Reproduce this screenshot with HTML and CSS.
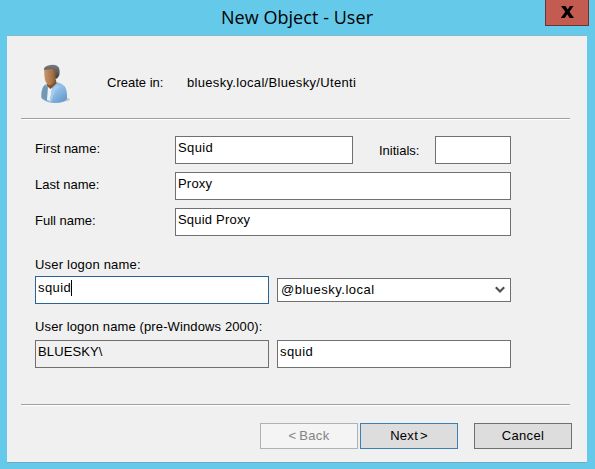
FILE: index.html
```html
<!DOCTYPE html>
<html lang="en">
<head>
<meta charset="utf-8">
<title>New Object - User</title>
<link rel="stylesheet" href="styles.css">
</head>
<body>
<div class="window">
  <header class="titlebar">
    <h1 class="title">New Object - User</h1>
    <button class="close" aria-label="Close">
      <svg width="14" height="12" viewBox="0 0 14 12"><path d="M1 0h4.500l2.200 3.500L10 0h3.500l-4 5.800L14 12H9.700L7.200 8.300 4.700 12H.8l4.500-6.200z"/></svg>
    </button>
  </header>
  <main class="panel">
    <section class="location">
      <svg class="avatar" width="32" height="42" viewBox="0 0 32 42">
        <defs>
          <linearGradient id="coat" x1="0" y1="0" x2="1" y2="1"><stop offset="0" stop-color="#89b5d6"/><stop offset=".5" stop-color="#91bfe8"/><stop offset="1" stop-color="#5c8fc5"/></linearGradient>
          <linearGradient id="skin" x1="0" y1="0" x2="1" y2="0"><stop offset="0" stop-color="#c8976d"/><stop offset=".6" stop-color="#a77448"/><stop offset="1" stop-color="#7a4e2b"/></linearGradient>
          <linearGradient id="hair" x1="0" y1="0" x2="0" y2="1"><stop offset="0" stop-color="#797b7c"/><stop offset="1" stop-color="#3c3e3f"/></linearGradient>
          <filter id="soft" x="-10%" y="-10%" width="120%" height="120%"><feGaussianBlur stdDeviation=".35"/></filter>
        </defs>
        <g filter="url(#soft)">
          <ellipse cx="18" cy="36.500" rx="11" ry="2.500" fill="#c8cacc"/>
          <path d="M5 21q-4 2-4.500 8-.5 5 .5 7 5 4 13 4 9 0 12-4 .5-9-2.500-13-3-3-8-4l-6 3z" fill="url(#coat)"/>
          <path d="M4 22q-4 4-3.500 13l5.500 3 2-12z" fill="#7199b4"/>
          <path d="M7 24l4 1-2 13-3-1z" fill="#eef1f4"/>
          <path d="M11 26l4-4 4 1-5 5-4 11H8.500z" fill="#a5cbed"/>
          <path d="M6.500 17H15l.5 3.500L9.500 26 6 23z" fill="#805333"/>
          <path d="M3 5q1-2 7-1l6 4-.5 7-2 4q-3 4-6 3Q4 20 3.500 14z" fill="url(#skin)"/>
          <path d="M3 7Q3 3 9 2q6-1 8.500 2 2 4 .5 9l-2.500 3-1-2v-6l-3-2z" fill="url(#hair)"/>
        </g>
      </svg>
      <span class="location-label">Create in:</span>
      <span class="t-path">bluesky.local/Bluesky/Utenti</span>
    </section>
    <hr class="rule">
    <form class="form">
      <div class="row">
        <label class="label">First name:</label>
        <div class="field first loose">Squid</div>
        <label class="initials-label">Initials:</label>
        <div class="field initials"></div>
      </div>
      <div class="row">
        <label class="label">Last name:</label>
        <div class="field wide"><span class="t-medium">Proxy</span></div>
      </div>
      <div class="row">
        <label class="label">Full name:</label>
        <div class="field wide"><span class="t-medium">Squid Proxy</span></div>
      </div>
      <label class="caption"><span class="t-medium">User logon name:</span></label>
      <div class="pair">
        <div class="field half focused"><span class="loose">squid</span><i class="caret"></i></div>
        <div class="combo"><span class="t-domain">@bluesky.local</span>
          <svg width="10" height="8" viewBox="0 0 10 8"><path d="M.8 1.300L5 5.500l4.200-4.200" fill="none" stroke="#505050" stroke-width="2.200"/></svg>
        </div>
      </div>
      <label class="caption second"><span class="t-pre">User logon name (pre-Windows 2000):</span></label>
      <div class="pair">
        <div class="field half readonly"><span class="t-pre">BLUESKY\</span></div>
        <div class="field half loose">squid</div>
      </div>
    </form>
    <hr class="rule">
    <footer class="actions">
      <button class="btn disabled"><span class="t-back">&lt; Back</span></button>
      <button class="btn default"><span class="t-next">Next &gt;</span></button>
      <button class="btn cancel"><span class="t-cancel">Cancel</span></button>
    </footer>
  </main>
</div>
</body>
</html>
```
FILE: styles.css
```css
* { box-sizing: border-box; }
body {
  margin: 0;
  width: 595px;
  height: 469px;
  overflow: hidden;
  background: #65c9e9;
  color: #000;
  font: 13px/16px "Liberation Sans", Arial, sans-serif;
}
button { font: inherit; color: inherit; padding: 0; }
.window { width: 595px; height: 469px; padding: 0 8px 7px 7px; }
.titlebar {
  display: grid;
  grid-template-columns: 538px 44px;
  height: 36px;
}
.title {
  margin: 0;
  padding: 5px 0 0 42px;
  text-align: center;
  font: 400 18px/25px "Open Sans", "Noto Sans", sans-serif;
  letter-spacing: 0.05px;
}
.close {
  display: flex;
  align-items: center;
  justify-content: center;
  width: 44px;
  height: 26px;
  padding-bottom: 1px;
  border: 1px solid #6b3434;
  border-top: 0;
  background: #c35b51;
}
.panel {
  height: 426px;
  padding: 0 14px;
  background: #f0f0f0;
  box-shadow: 0 1px #6fabc5, 0 -1px #83b8cb;
}
.location {
  display: flex;
  align-items: flex-start;
  height: 82px;
  padding: 27px 0 0 20px;
}
.avatar { flex: none; }
.location-label { width: 80px; margin-left: 34px; }
.location-label, .t-path { margin-top: 12px; }
.rule {
  width: 549px;
  height: 2px;
  margin: 0;
  border: 0;
  border-top: 1px solid #a0a0a0;
  background: #fff;
}
.form { height: 284px; padding: 16px 0 0 14px; }
.row { display: flex; height: 28px; margin-bottom: 8px; }
.label { width: 140px; padding-top: 5px; }
.field {
  height: 28px;
  padding: 3px 2px;
  border: 1px solid #707070;
  background: #fff;
  white-space: nowrap;
}
.first { width: 178px; }
.wide { width: 336px; }
.initials-label { width: 56px; margin-left: 26px; padding-top: 7px; }
.initials { width: 76px; }
.caption { display: block; height: 20px; margin-top: 20px; padding-top: 1px; }
.caption.second { height: 24px; margin-top: 12px; padding-top: 3px; }
.pair { display: flex; align-items: center; gap: 8px; height: 28px; }
.half { width: 234px; }
.focused { display: flex; border-color: #2a6496; }
.caret { width: 1px; height: 16px; background: #000; }
.readonly { background: #f0f0f0; }
.combo {
  display: flex;
  align-items: center;
  justify-content: space-between;
  width: 234px;
  height: 24px;
  padding: 0 5px 0 3px;
  border: 1px solid #707070;
  background: #fff;
}
.actions { display: flex; padding: 17px 0 0 239px; }
.btn {
  width: 98px;
  height: 26px;
  margin-right: 2px;
  border: 1px solid #707070;
  background: #ddd;
}
.disabled { border-color: #adb2b5; background: #f4f4f4; color: #838383; }
.default { border-color: #3c7fb1; }
.cancel { margin: 0 0 0 14px; }
.loose { letter-spacing: 0.4px; }
.t-medium { letter-spacing: 0.2px; }
.t-pre { letter-spacing: 0.12px; }
.t-path { letter-spacing: 0.32px; }
.t-domain { letter-spacing: 0.5px; }
.t-cancel { letter-spacing: 0.3px; }
.t-back { letter-spacing: 0.3px; word-spacing: -1px; }
.t-next { letter-spacing: 0.3px; word-spacing: -2px; }
```
